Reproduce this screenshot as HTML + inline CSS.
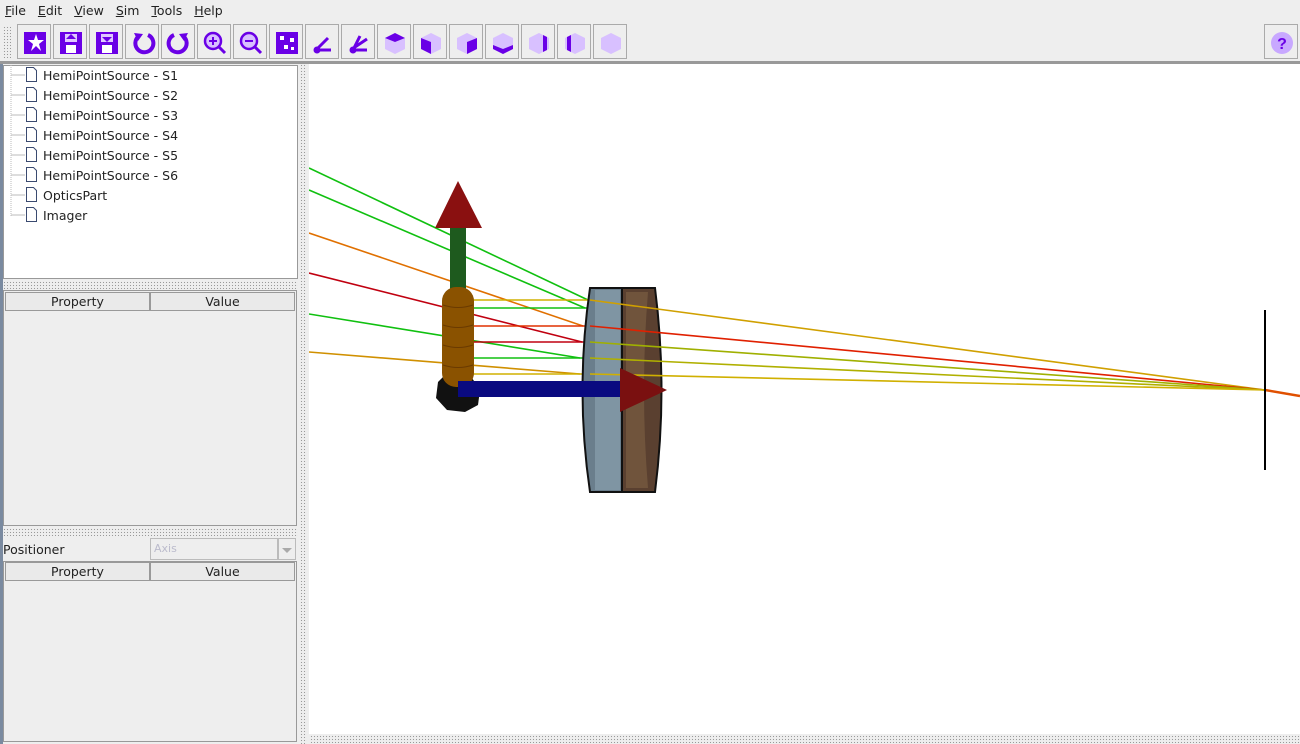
<!DOCTYPE html>
<html><head><style>
*{margin:0;padding:0;box-sizing:border-box}
body{width:1300px;height:744px;background:#eeeeee;font-family:"DejaVu Sans","Liberation Sans",sans-serif;font-size:12px;color:#222;position:relative;overflow:hidden}
.abs{position:absolute}
.menu span{margin-right:12px}
.btn{position:absolute;top:24px;width:34px;height:35px;border:1px solid #aaa;background:#eee}
.btn svg{position:absolute;left:4px;top:5px}
.dots{background-image:radial-gradient(#999 0.6px,transparent 0.8px);background-size:3px 3px}
.hdr{position:absolute;height:19px;border:1px solid #999;background:#eaeaea;text-align:center;line-height:17px;font-size:12.5px}
.tree div{height:20px;line-height:20px;font-size:12.5px;position:relative;padding-left:39px}
</style></head><body>
<div class="abs menu" style="left:5px;top:3px;font-size:12.5px"><span><u>F</u>ile</span><span><u>E</u>dit</span><span><u>V</u>iew</span><span><u>S</u>im</span><span><u>T</u>ools</span><span><u>H</u>elp</span></div>
<div class="abs dots" style="left:3px;top:26px;width:8px;height:32px"></div>
<div class="abs" style="left:0;top:61px;width:1300px;height:3px;background:#999"></div>

<div class="btn" style="left:17px"><svg width="26" height="26"><rect x="2" y="2" width="22" height="22" fill="#6a00e6"/><path d="M14 4 L16 10 L22 10 L17 14 L19 21 L14 16 L9 21 L11 14 L6 10 L12 10Z" fill="#fff"/></svg></div>
<div class="btn" style="left:53px"><svg width="26" height="26"><rect x="2" y="2" width="22" height="22" fill="#6a00e6"/><rect x="7" y="4" width="12" height="8" fill="#e0c8ff"/><path d="M13 4 L18 9 L8 9Z" fill="#6a00e6"/><rect x="8" y="15" width="10" height="8" fill="#fff"/></svg></div>
<div class="btn" style="left:89px"><svg width="26" height="26"><rect x="2" y="2" width="22" height="22" fill="#6a00e6"/><rect x="7" y="4" width="12" height="8" fill="#e0c8ff"/><path d="M13 12 L18 7 L8 7Z" fill="#6a00e6"/><rect x="8" y="15" width="10" height="8" fill="#fff"/></svg></div>
<div class="btn" style="left:125px"><svg width="26" height="26"><path d="M9 6 A9 9 0 1 0 18 5" stroke="#6a00e6" stroke-width="4" fill="none"/><path d="M4 3 L13 4 L8 11Z" fill="#6a00e6"/></svg></div>
<div class="btn" style="left:161px"><svg width="26" height="26"><path d="M17 6 A9 9 0 1 1 8 5" stroke="#6a00e6" stroke-width="4" fill="none"/><path d="M22 3 L13 4 L18 11Z" fill="#6a00e6"/></svg></div>
<div class="btn" style="left:197px"><svg width="26" height="26"><circle cx="11" cy="11" r="8" fill="#d8c0ff" stroke="#6a00e6" stroke-width="2.5"/><path d="M11 7v8M7 11h8" stroke="#6a00e6" stroke-width="2"/><path d="M17 17l6 6" stroke="#6a00e6" stroke-width="3"/></svg></div>
<div class="btn" style="left:233px"><svg width="26" height="26"><circle cx="11" cy="11" r="8" fill="#d8c0ff" stroke="#6a00e6" stroke-width="2.5"/><path d="M7 11h8" stroke="#6a00e6" stroke-width="2"/><path d="M17 17l6 6" stroke="#6a00e6" stroke-width="3"/></svg></div>
<div class="btn" style="left:269px"><svg width="26" height="26"><rect x="2" y="2" width="22" height="22" fill="#6a00e6"/><rect x="6" y="6" width="4" height="4" fill="#fff"/><rect x="16" y="8" width="4" height="4" fill="#fff"/><rect x="10" y="15" width="4" height="4" fill="#fff"/><rect x="17" y="17" width="3" height="3" fill="#fff"/></svg></div>
<div class="btn" style="left:305px"><svg width="26" height="26"><circle cx="7" cy="20" r="3.5" fill="#6a00e6"/><path d="M8 18 L18 8 M9 20 L21 20" stroke="#6a00e6" stroke-width="3"/></svg></div>
<div class="btn" style="left:341px"><svg width="26" height="26"><circle cx="7" cy="20" r="3.5" fill="#6a00e6"/><path d="M8 18 L14 6 M9 17 L21 9 M9 20 L21 20" stroke="#6a00e6" stroke-width="3"/></svg></div>
<div class="btn" style="left:377px"><svg width="26" height="26"><path d="M13 3 L23 8 L23 19 L13 24 L3 19 L3 8Z" fill="#d8c0ff"/><path d="M13 3 L23 8 L13 12 L3 8Z" fill="#6a00e6"/></svg></div>
<div class="btn" style="left:413px"><svg width="26" height="26"><path d="M13 3 L23 8 L23 19 L13 24 L3 19 L3 8Z" fill="#d8c0ff"/><path d="M3 8 L13 12 L13 24 L3 19Z" fill="#6a00e6"/></svg></div>
<div class="btn" style="left:449px"><svg width="26" height="26"><path d="M13 3 L23 8 L23 19 L13 24 L3 19 L3 8Z" fill="#d8c0ff"/><path d="M23 8 L13 12 L13 24 L23 19Z" fill="#6a00e6"/></svg></div>
<div class="btn" style="left:485px"><svg width="26" height="26"><path d="M13 3 L23 8 L23 19 L13 24 L3 19 L3 8Z" fill="#d8c0ff"/><path d="M3 15 L13 19 L23 15 L23 19 L13 24 L3 19Z" fill="#6a00e6"/></svg></div>
<div class="btn" style="left:521px"><svg width="26" height="26"><path d="M13 3 L23 8 L23 19 L13 24 L3 19 L3 8Z" fill="#d8c0ff"/><path d="M17 5 L21 7 L21 20 L17 22Z" fill="#6a00e6"/></svg></div>
<div class="btn" style="left:557px"><svg width="26" height="26"><path d="M13 3 L23 8 L23 19 L13 24 L3 19 L3 8Z" fill="#d8c0ff"/><path d="M5 7 L9 5 L9 22 L5 20Z" fill="#6a00e6"/></svg></div>
<div class="btn" style="left:593px"><svg width="26" height="26"><path d="M13 3 L23 8 L23 19 L13 24 L3 19 L3 8Z" fill="#d8c0ff"/></svg></div>
<div class="btn" style="left:1264px"><svg width="26" height="26"><circle cx="13" cy="13" r="11" fill="#c8a8ff"/><text x="13" y="19" text-anchor="middle" font-size="16" font-weight="bold" fill="#6a00e6" font-family="Liberation Sans">?</text></svg></div>

<div class="abs" style="left:0;top:64px;width:3px;height:680px;background:#7a8aa0"></div>
<div class="abs tree" style="left:3px;top:65px;width:295px;height:214px;background:#fff;border:1px solid #999">
<div>HemiPointSource - S1</div><div>HemiPointSource - S2</div><div>HemiPointSource - S3</div><div>HemiPointSource - S4</div><div>HemiPointSource - S5</div><div>HemiPointSource - S6</div><div>OpticsPart</div><div>Imager</div>
</div>
<svg class="abs" style="left:3px;top:65px" width="40" height="165">
<path d="M8 0 V151" stroke="#bbb" stroke-dasharray="1 1"/>
<g stroke="#bbb"><path d="M8 10h14M8 30h14M8 50h14M8 70h14M8 90h14M8 110h14M8 130h14M8 150h14"/></g>
<g fill="#fff" stroke="#3a4a70"><path d="M23.5 2.5h7l3 3v11h-10z"/><path d="M23.5 22.5h7l3 3v11h-10z"/><path d="M23.5 42.5h7l3 3v11h-10z"/><path d="M23.5 62.5h7l3 3v11h-10z"/><path d="M23.5 82.5h7l3 3v11h-10z"/><path d="M23.5 102.5h7l3 3v11h-10z"/><path d="M23.5 122.5h7l3 3v11h-10z"/><path d="M23.5 142.5h7l3 3v11h-10z"/></g>
</svg>
<div class="abs dots" style="left:3px;top:281px;width:295px;height:8px"></div>
<div class="abs" style="left:3px;top:290px;width:294px;height:236px;border:1px solid #999;background:#eee"></div>
<div class="hdr" style="left:5px;top:292px;width:145px">Property</div>
<div class="hdr" style="left:150px;top:292px;width:145px">Value</div>
<div class="abs dots" style="left:3px;top:528px;width:295px;height:8px"></div>
<div class="abs" style="left:3px;top:542px;font-size:12.5px">Positioner</div>
<div class="abs" style="left:150px;top:538px;width:128px;height:22px;border:1px solid #bbb;background:#eee;color:#bbc;font-size:11px;line-height:20px;padding-left:3px">Axis</div>
<div class="abs" style="left:278px;top:538px;width:18px;height:22px;border:1px solid #bbb;background:#eee"><svg width="16" height="20"><path d="M3 9 L13 9 L8 14Z" fill="#aaa"/></svg></div>
<div class="abs" style="left:3px;top:561px;width:294px;height:181px;border:1px solid #999;background:#eee"></div>
<div class="hdr" style="left:5px;top:562px;width:145px">Property</div>
<div class="hdr" style="left:150px;top:562px;width:145px">Value</div>
<div class="abs dots" style="left:300px;top:64px;width:7px;height:680px"></div>
<div class="abs dots" style="left:310px;top:735px;width:990px;height:8px"></div>

<svg class="abs" style="left:309px;top:64px;background:#fff" width="991" height="670" viewBox="309 64 991 670">
<g stroke-width="1.6" fill="none">
<path d="M309 168 L588 300" stroke="#10c010"/>
<path d="M309 190 L585 308" stroke="#10c010"/>
<path d="M309 233 L583 326" stroke="#e07000"/>
<path d="M309 273 L582 342" stroke="#c00010"/>
<path d="M309 314 L580 358" stroke="#10c010"/>
<path d="M309 352 L580 374" stroke="#d09000"/>
<path d="M470 300 L590 300" stroke="#d0b000"/>
<path d="M470 308 L590 308" stroke="#10c010"/>
<path d="M470 326 L590 326" stroke="#e03000"/>
<path d="M470 342 L590 342" stroke="#c00010"/>
<path d="M470 358 L590 358" stroke="#10c010"/>
<path d="M470 374 L590 374" stroke="#d0b000"/>
</g>
<path d="M590 288 L622 288 L622 492 L590 492 Q575 390 590 288Z" fill="#6a7e8c" stroke="#111" stroke-width="2"/>
<path d="M595 290 L620 290 L620 490 L595 490Z" fill="#7f95a3"/>
<path d="M622 288 L655 288 Q668 390 655 492 L622 492Z" fill="#5a4030" stroke="#111" stroke-width="2"/>
<path d="M626 292 L648 292 Q640 390 648 488 L626 488Z" fill="#70543c"/>
<g stroke-width="1.6" fill="none">
<path d="M590 300 L1265 390" stroke="#d0a000"/>
<path d="M590 326 L1265 390" stroke="#e02000"/>
<path d="M590 342 L1265 390" stroke="#a0b000"/>
<path d="M590 358 L1265 390" stroke="#b0b000"/>
<path d="M590 374 L1265 390" stroke="#d0b000"/>
<path d="M1265 390 L1300 396" stroke="#e05000" stroke-width="2.5"/>
</g>
<path d="M1265 310 V470" stroke="#000" stroke-width="2"/>
<path d="M450 228 H466 V295 H450Z" fill="#1e5a1e"/>
<path d="M458 181 L482 228 L435 228Z" fill="#8a1010"/>
<path d="M445 375 L470 375 L480 390 L478 405 L465 412 L447 410 L436 398 L438 382Z" fill="#111"/>
<rect x="442" y="287" width="32" height="100" rx="14" fill="#8a5200"/>
<g stroke="#6a3a00" fill="none"><path d="M443 305 Q458 310 473 305M443 325 Q458 330 473 325M443 345 Q458 350 473 345M443 365 Q458 370 473 365"/></g>
<rect x="458" y="381" width="165" height="16" fill="#0a0a80"/>
<path d="M620 368 L667 390 L620 412Z" fill="#7a1010"/>
</svg>
</body></html>
